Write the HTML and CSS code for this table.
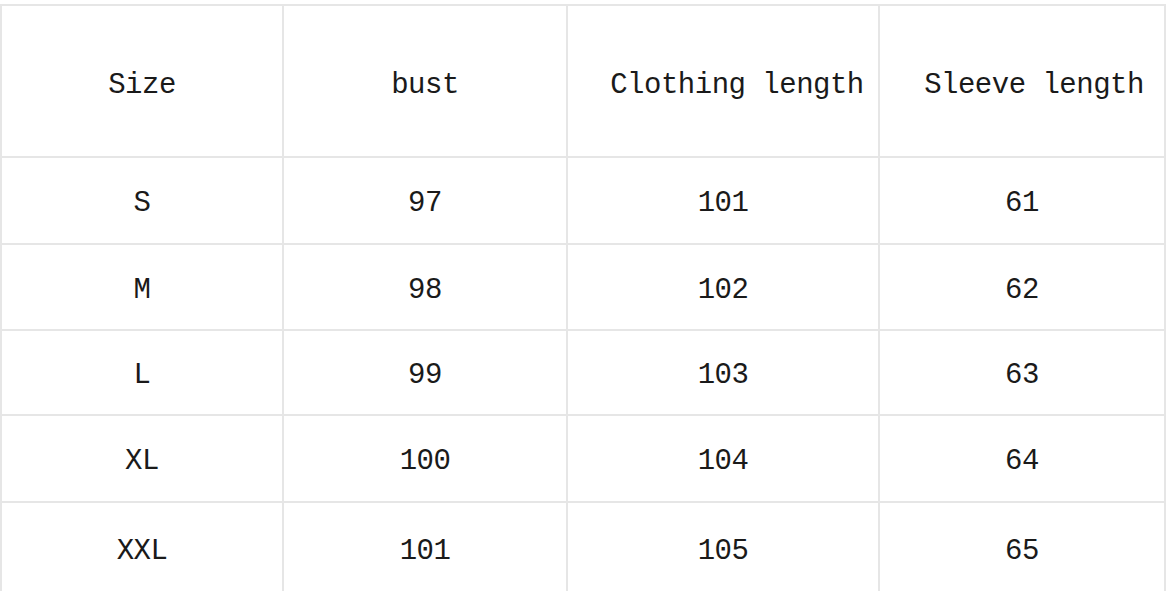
FILE: index.html
```html
<!DOCTYPE html>
<html>
<head>
<meta charset="utf-8">
<link rel="stylesheet" href="styles.css">
</head>
<body>
<table class="size-table">
  <colgroup>
    <col class="c1"><col class="c2"><col class="c3"><col class="c4">
  </colgroup>
  <thead>
    <tr class="head">
      <th>Size</th>
      <th>bust</th>
      <th class="h3">Clothing length</th>
      <th class="h4">Sleeve length</th>
    </tr>
  </thead>
  <tbody>
    <tr class="r1"><td>S</td><td>97</td><td>101</td><td>61</td></tr>
    <tr class="r2"><td>M</td><td>98</td><td>102</td><td>62</td></tr>
    <tr class="r3"><td>L</td><td>99</td><td>103</td><td>63</td></tr>
    <tr class="r4"><td>XL</td><td>100</td><td>104</td><td>64</td></tr>
    <tr class="r5"><td>XXL</td><td>101</td><td>105</td><td>65</td></tr>
  </tbody>
</table>
</body>
</html>
```
FILE: styles.css
```css
html, body {
  margin: 0;
  padding: 0;
  background: #ffffff;
  overflow: hidden;
}
.size-table {
  margin-top: 4px;
  width: 1166px;
  table-layout: fixed;
  border-collapse: collapse;
  font-family: "Liberation Mono", "DejaVu Sans Mono", monospace;
  font-size: 29px;
  color: #1a1a1a;
}
.c1 { width: 282px; }
.c2 { width: 284px; }
.c3 { width: 312px; }
.c4 { width: 286px; }
.size-table th,
.size-table td {
  border: 2px solid #e6e6e6;
  text-align: center;
  vertical-align: middle;
  padding: 6px 0 0 0;
  font-weight: normal;
  white-space: nowrap;
  letter-spacing: -0.5px;
}
.head th { height: 142px; padding-top: 8px; }
.h3 { padding-left: 28px !important; }
.h4 { padding-left: 24px !important; }
.r1 td { height: 79px; }
.r2 td { height: 78px; }
.r3 td { height: 77px; }
.r4 td { height: 79px; }
.r5 td { height: 79px; vertical-align: top; padding-top: 32px; }
.r5 td { border-bottom-color: transparent; }
```
